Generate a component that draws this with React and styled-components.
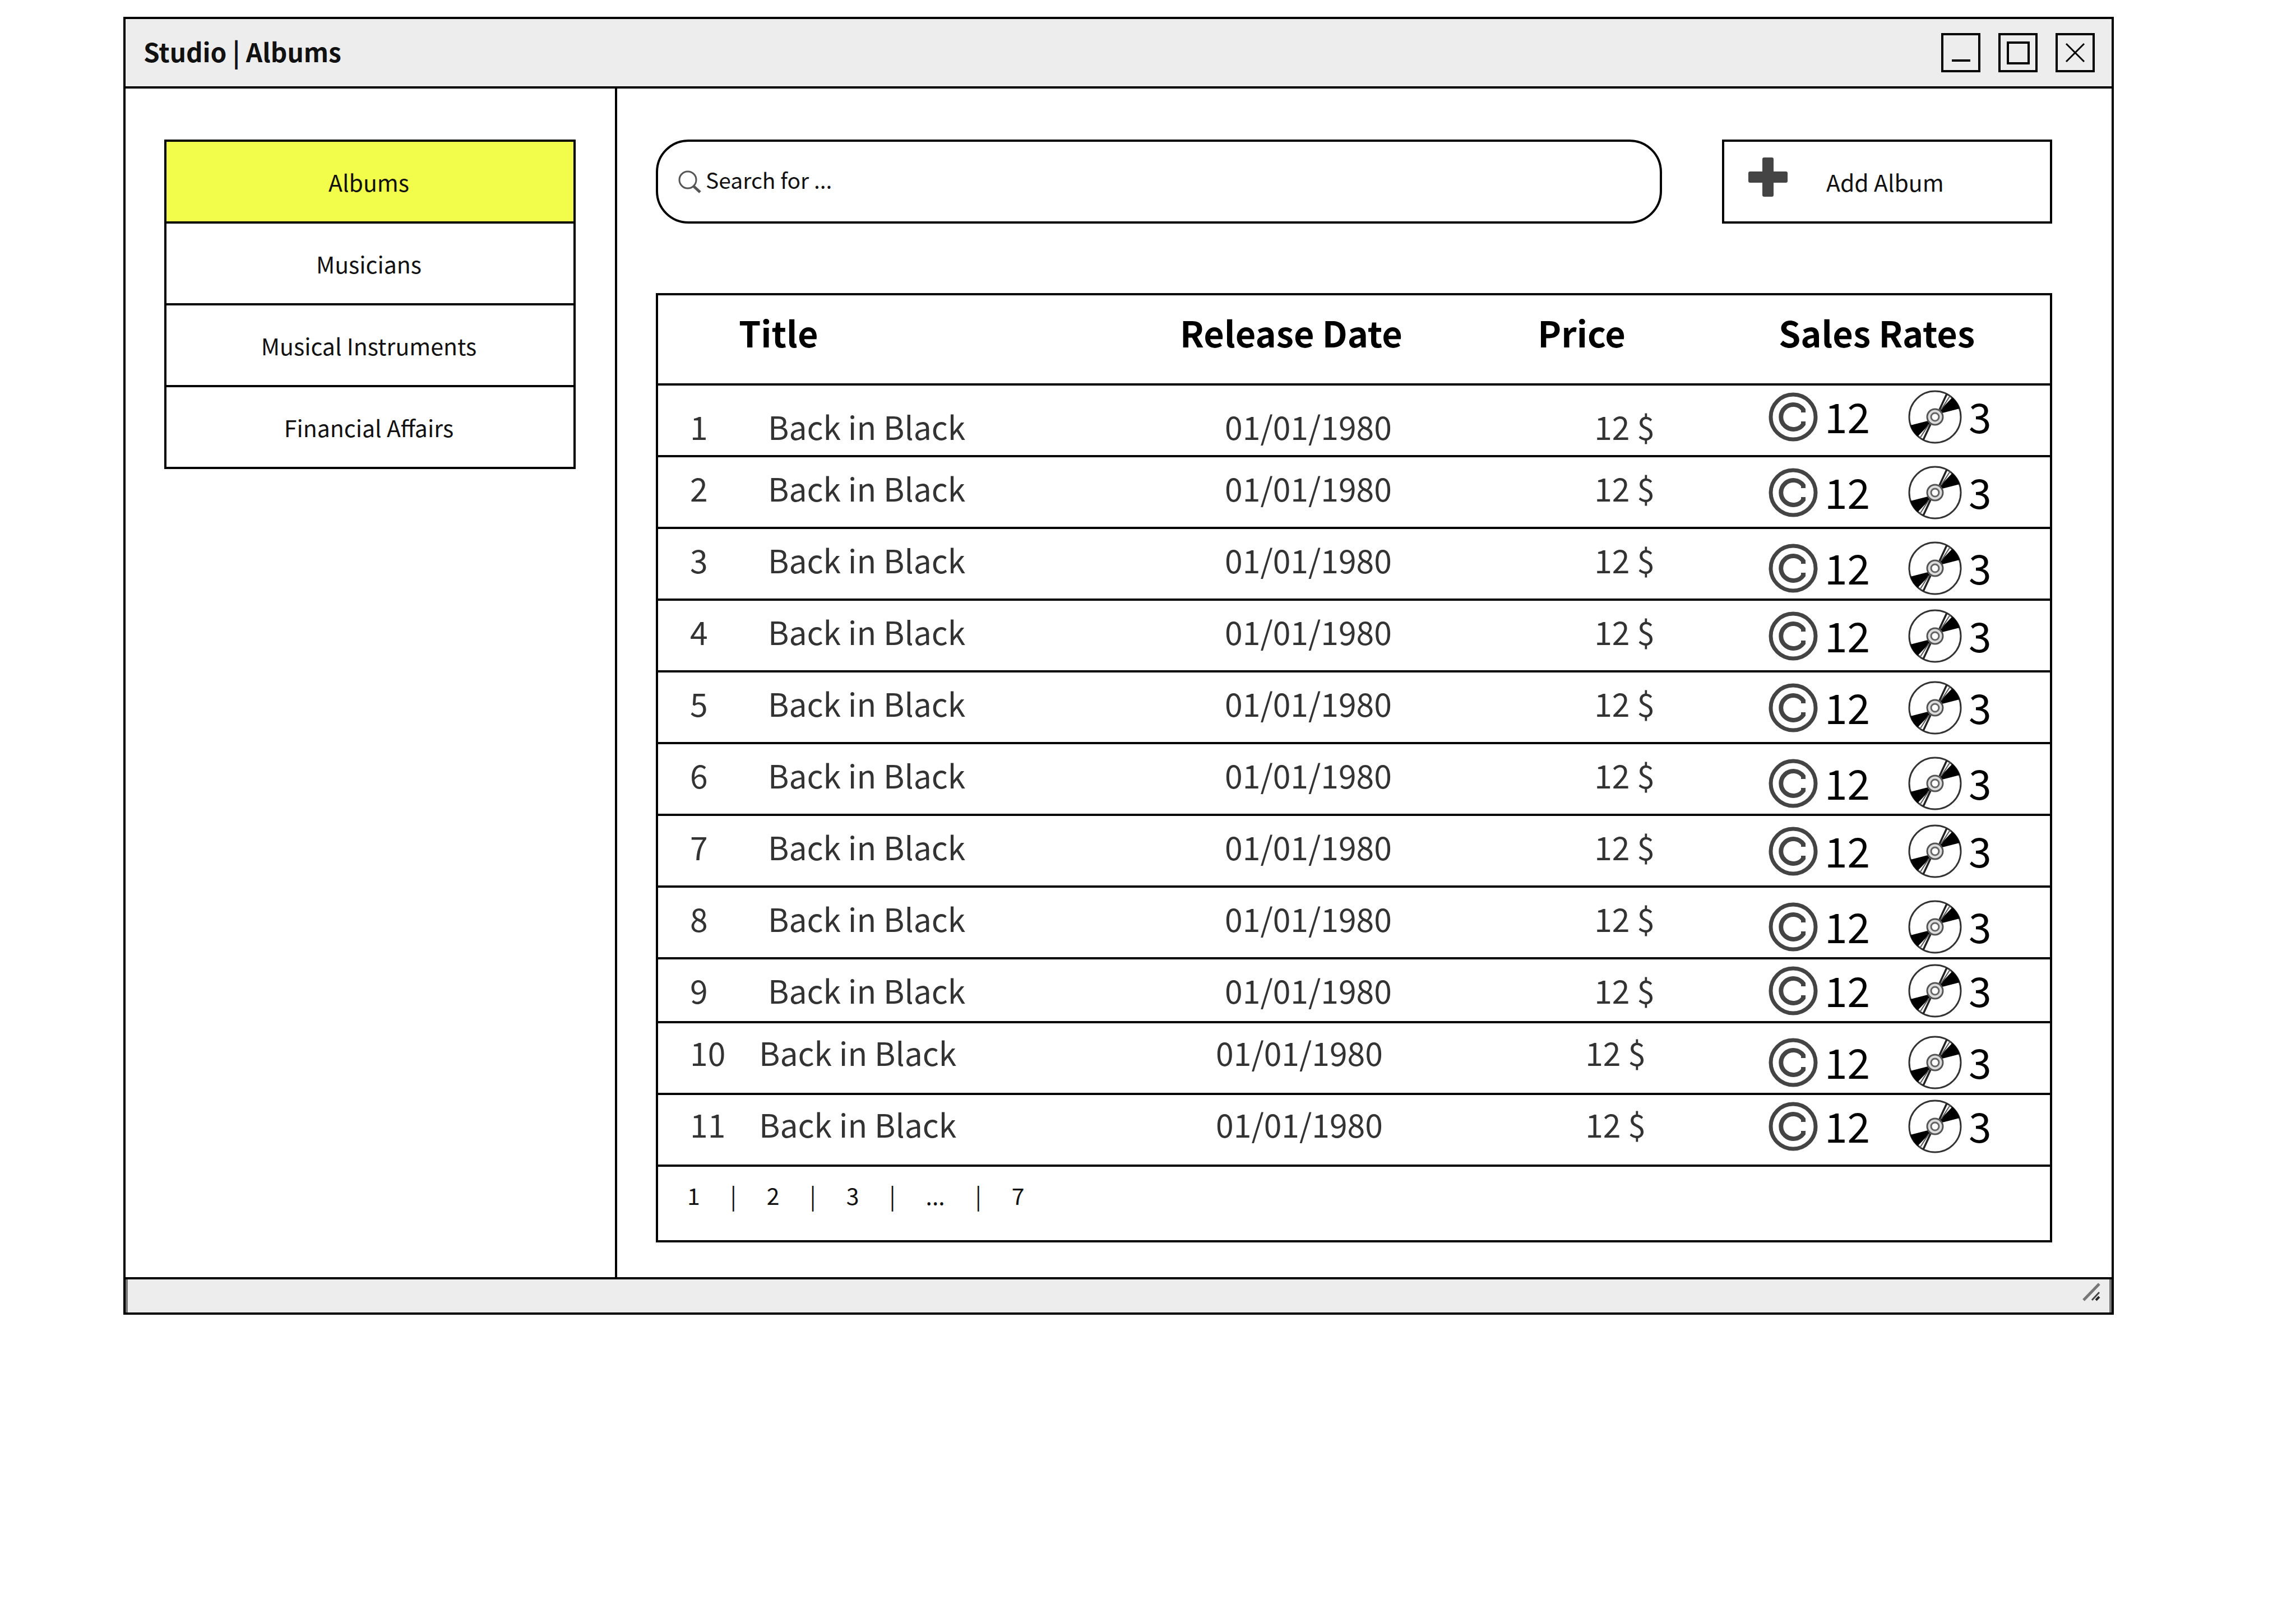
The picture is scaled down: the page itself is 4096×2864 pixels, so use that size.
import React from "react";
import styled, { createGlobalStyle, css } from "styled-components";

const LINE = "4px solid #000";

const GlobalStyle = createGlobalStyle`
  *, *::before, *::after { box-sizing: border-box; }
  body {
    margin: 0;
    background: #fff;
    color: #111;
    font-family: "Noto Sans CJK SC", "Noto Sans", sans-serif;
    font-size: 41px;
    line-height: 64px;
  }
  button, input { font: inherit; color: inherit; }
`;

const Page = styled.div`
  padding: 30px 325px 0 220px;
`;

const Window = styled.div`
  display: flex;
  flex-direction: column;
  border: ${LINE};
`;

const TitleBar = styled.header`
  display: flex;
  align-items: center;
  justify-content: space-between;
  height: 124px;
  padding: 0 30px 0 32px;
  background: #ededed;
  border-bottom: ${LINE};
`;

const WindowTitle = styled.h1`
  margin: 0;
  padding-bottom: 6px;
  font-size: 46px;
  line-height: 64px;
  font-weight: 700;
`;

const WindowControls = styled.div`
  display: flex;
  gap: 32px;
`;

const ControlButton = styled.button`
  display: block;
  width: 70px;
  height: 70px;
  padding: 0;
  border: ${LINE};
  background: none;

  svg {
    display: block;
    width: 62px;
    height: 62px;
    fill: none;
    stroke: #000;
    stroke-width: 4;
  }
`;

const Body = styled.div`
  display: flex;
`;

const Sidebar = styled.aside`
  flex: none;
  width: 877px;
  padding: 91px 70px 0 69px;
  border-right: ${LINE};
`;

const Menu = styled.nav`
  display: flex;
  flex-direction: column;
  border: ${LINE};
`;

const MenuLink = styled.a`
  display: flex;
  align-items: center;
  justify-content: center;
  height: ${(p) => (p.$last ? "142px" : "146px")};
  padding-right: 4px;
  border-bottom: ${(p) => (p.$last ? "none" : LINE)};
  background: ${(p) => (p.$active ? "#f1fd4a" : "#fff")};
  color: inherit;
  text-decoration: none;
`;

const Main = styled.main`
  flex: 1;
  min-width: 0;
  padding: 91px 106px 62px 69px;
`;

const Toolbar = styled.div`
  display: flex;
  gap: 107px;
  margin-bottom: 124px;
`;

const SearchBox = styled.label`
  flex: 1;
  display: flex;
  align-items: center;
  gap: 8px;
  height: 150px;
  padding: 0 36px;
  border: ${LINE};
  border-radius: 58px;

  svg {
    flex: none;
    width: 41px;
    height: 41px;
    fill: none;
    stroke: #555;
  }
`;

const SearchInput = styled.input`
  flex: 1;
  min-width: 0;
  height: 100px;
  padding: 0 0 8px;
  border: none;
  outline: none;
  background: none;
  font-size: 39px;

  &::placeholder {
    color: #111;
    opacity: 1;
  }
`;

const AddButton = styled.button`
  flex: none;
  display: flex;
  align-items: center;
  gap: 68px;
  width: 589px;
  height: 150px;
  padding: 0 42px;
  border: ${LINE};
  background: #fff;

  svg {
    flex: none;
    width: 72px;
    height: 72px;
    margin-bottom: 16px;
    fill: #444;
  }
`;

const Card = styled.section`
  border: ${LINE};
`;

const AlbumTable = styled.table`
  width: 100%;
  table-layout: fixed;
  border-collapse: separate;
  border-spacing: 0;
`;

const Column = styled.col`
  width: ${(p) => p.$width};
`;

const HeadCell = styled.th`
  height: 161px;
  padding: 26px 0 0 ${(p) => p.$inset || "0"};
  border-bottom: ${LINE};
  color: #000;
  font-size: 63px;
  line-height: 80px;
  font-weight: 700;
  text-align: left;
  vertical-align: top;
  white-space: nowrap;
`;

const Row = styled.tr`
  height: ${(p) => (p.$short ? "113px" : "128px")};
`;

const insets = { number: 57, title: 52, date: 80, price: 101 };

const Cell = styled.td`
  padding: 18px 0 0 ${(p) => insets[p.$kind]}px;
  border-bottom: ${LINE};
  color: #333;
  font-size: 57px;
  line-height: 72px;
  vertical-align: top;
  white-space: nowrap;

  ${(p) =>
    p.$first &&
    css`
      padding-top: 0;
      padding-bottom: 16px;
      vertical-align: bottom;
    `}

  ${(p) =>
    p.$wide &&
    css`
      padding-top: 15px;
      padding-left: ${insets[p.$kind] - (p.$kind === "number" ? 0 : 16)}px;
    `}
`;

const SalesCell = styled.td`
  padding: 8px 0 6px 12px;
  border-bottom: ${LINE};
  vertical-align: ${(p) => p.$align};
`;

const Sales = styled.div`
  display: flex;
  align-items: center;
  gap: 68px;
`;

const Rate = styled.span`
  display: flex;
  align-items: center;
  gap: 12px;

  svg {
    display: block;
    flex: none;
  }
`;

const RateValue = styled.span`
  padding-bottom: 6px;
  color: #000;
  font-size: 73px;
  line-height: 80px;
`;

const Pagination = styled.nav`
  display: flex;
  gap: 54px;
  height: 131px;
  padding: 18px 0 0 52px;
`;

const PageLink = styled.a`
  color: inherit;
  text-decoration: none;
`;

const StatusBar = styled.footer`
  display: flex;
  justify-content: flex-end;
  height: 63px;
  padding: 6px 20px 0;
  border-top: ${LINE};
  background: #ededed;
  box-shadow: inset 4px 0 #777, inset -4px 0 #777;
`;

function SearchIcon() {
  return (
    <svg viewBox="0 0 41 41" aria-hidden="true">
      <circle cx="17" cy="17" r="15" strokeWidth="3" />
      <path d="M27 28 L39 39" strokeWidth="5" />
    </svg>
  );
}

function PlusIcon() {
  return (
    <svg viewBox="0 0 72 72" aria-hidden="true">
      <rect x="26" y="1" width="20" height="70" rx="3" />
      <rect x="1" y="26" width="70" height="20" rx="3" />
    </svg>
  );
}

function CopyrightIcon() {
  return (
    <svg width="88" height="88" viewBox="-44 -44 88 88" fill="none" stroke="#444" aria-label="Copyrights">
      <circle r="40" strokeWidth="7" />
      <path d="M18 -8 V-13 A22 22 0 1 0 18 13 V8" strokeWidth="8" />
    </svg>
  );
}

function DiscHalf() {
  return (
    <g>
      <path d="M9 -6 L44 -15 A46 46 0 0 0 31 -35 L10 -13 Z" fill="#000" />
      <path d="M8 -13 L21 -41" stroke="#222" strokeWidth="3.5" />
      <path d="M11 -13 L27 -38" stroke="#555" strokeWidth="2" />
    </g>
  );
}

function DiscIcon() {
  return (
    <svg width="96" height="96" viewBox="-48 -48 96 96" fill="none" aria-label="Records">
      <circle r="46" stroke="#333" strokeWidth="3" />
      <DiscHalf />
      <g transform="rotate(180)">
        <DiscHalf />
      </g>
      <circle r="14" fill="#ddd" stroke="#555" strokeWidth="3" />
      <circle r="7" fill="#fff" stroke="#666" strokeWidth="3" />
    </svg>
  );
}

function GripIcon() {
  return (
    <svg width="32" height="34" viewBox="0 0 32 34" aria-hidden="true">
      <path d="M2 31 L30 2" stroke="#777" strokeWidth="5" />
      <path d="M17 31 L30 17" stroke="#444" strokeWidth="3" />
      <path d="M24 31 L30 25" stroke="#222" strokeWidth="4" />
    </svg>
  );
}

const menu = ["Albums", "Musicians", "Musical Instruments", "Financial Affairs"];

const album = { title: "Back in Black", date: "01/01/1980", price: "12 $", rights: 12, records: 3 };

const salesAlign = [
  "top", "middle", "bottom", "middle", "middle", "bottom",
  "middle", "bottom", "bottom", "bottom", "top",
];

const albums = salesAlign.map((align, i) => ({ ...album, number: i + 1, align }));

export default function App() {
  return (
    <>
      <GlobalStyle />
      <Page>
        <Window>
          <TitleBar>
            <WindowTitle>Studio | Albums</WindowTitle>
            <WindowControls>
              <ControlButton type="button" aria-label="Minimize">
                <svg viewBox="0 0 62 62"><path d="M15 45 H48" /></svg>
              </ControlButton>
              <ControlButton type="button" aria-label="Maximize">
                <svg viewBox="0 0 62 62"><rect x="13" y="13" width="37" height="37" /></svg>
              </ControlButton>
              <ControlButton type="button" aria-label="Close">
                <svg viewBox="0 0 62 62"><path d="M15 15 L47 47 M47 15 L15 47" strokeWidth="3" /></svg>
              </ControlButton>
            </WindowControls>
          </TitleBar>

          <Body>
            <Sidebar>
              <Menu aria-label="Sections">
                {menu.map((name, i) => (
                  <MenuLink key={name} href="#" $active={i === 0} $last={i === menu.length - 1}>
                    {name}
                  </MenuLink>
                ))}
              </Menu>
            </Sidebar>

            <Main>
              <Toolbar>
                <SearchBox>
                  <SearchIcon />
                  <SearchInput type="text" placeholder="Search for ..." aria-label="Search" />
                </SearchBox>
                <AddButton type="button">
                  <PlusIcon />
                  Add Album
                </AddButton>
              </Toolbar>

              <Card>
                <AlbumTable>
                  <colgroup>
                    <Column $width="5.8%" />
                    <Column $width="31.7%" />
                    <Column $width="25.7%" />
                    <Column $width="16.1%" />
                    <Column $width="20.7%" />
                  </colgroup>
                  <thead>
                    <tr>
                      <HeadCell aria-label="Number" />
                      <HeadCell scope="col">Title</HeadCell>
                      <HeadCell scope="col">Release Date</HeadCell>
                      <HeadCell scope="col">Price</HeadCell>
                      <HeadCell scope="col" $inset="30px">Sales Rates</HeadCell>
                    </tr>
                  </thead>
                  <tbody>
                    {albums.map((a) => {
                      const place = { $first: a.number === 1, $wide: a.number > 9 };
                      return (
                        <Row key={a.number} $short={a.number === 9}>
                          <Cell $kind="number" {...place}>{a.number}</Cell>
                          <Cell $kind="title" {...place}>{a.title}</Cell>
                          <Cell $kind="date" {...place}>{a.date}</Cell>
                          <Cell $kind="price" {...place}>{a.price}</Cell>
                          <SalesCell $align={a.align}>
                            <Sales>
                              <Rate><CopyrightIcon /><RateValue>{a.rights}</RateValue></Rate>
                              <Rate><DiscIcon /><RateValue>{a.records}</RateValue></Rate>
                            </Sales>
                          </SalesCell>
                        </Row>
                      );
                    })}
                  </tbody>
                </AlbumTable>
                <Pagination aria-label="Pages">
                  <PageLink href="#">1</PageLink>
                  <span>|</span>
                  <PageLink href="#">2</PageLink>
                  <span>|</span>
                  <PageLink href="#">3</PageLink>
                  <span>|</span>
                  <span>...</span>
                  <span>|</span>
                  <PageLink href="#">7</PageLink>
                </Pagination>
              </Card>
            </Main>
          </Body>

          <StatusBar>
            <GripIcon />
          </StatusBar>
        </Window>
      </Page>
    </>
  );
}
